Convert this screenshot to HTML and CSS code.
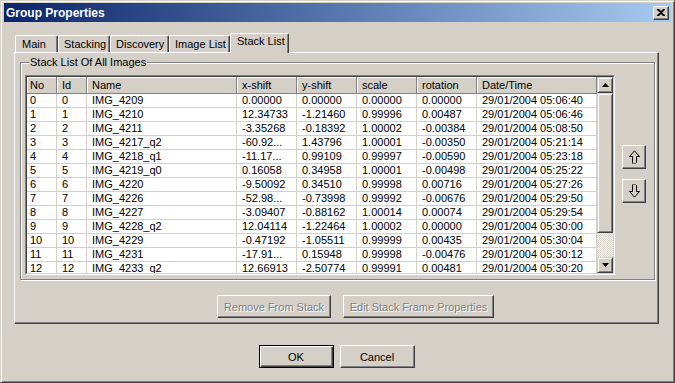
FILE: index.html
```html
<!DOCTYPE html>
<html lang="en">

<head>
    <meta charset="UTF-8">
    <title>Group Properties</title>
    <link rel="stylesheet" href="styles.css">
</head>

<body>

    <div class="window">
        <!-- Title bar -->
        <div class="titlebar">
            <span class="title">Group Properties</span>
            <button class="close-btn" type="button">
                <svg width="8" height="7" viewBox="0 0 8 7">
                    <path d="M0 0h2l2 2 2-2h2v1L5 3.5 8 6v1H6L4 5 2 7H0V6l3-2.5L0 1z" fill="#000"/>
                </svg>
            </button>
        </div>

        <div class="client">
            <!-- Tabs -->
            <div class="tabs">
                <div class="tab tab-main">Main</div>
                <div class="tab tab-stacking">Stacking</div>
                <div class="tab tab-discovery">Discovery</div>
                <div class="tab tab-images">Image List</div>
                <div class="tab tab-stack active">Stack List</div>
            </div>

            <div class="panel">
                <fieldset class="group">
                    <legend>Stack List Of All Images</legend>
                    <div class="group-body">
                        <div class="listview">
                            <div class="listview-inner">
                                <div class="list-body">
                                    <table class="stack-table">
                                        <colgroup>
                                            <col class="c-no">
                                            <col class="c-id">
                                            <col class="c-name">
                                            <col class="c-num">
                                            <col class="c-num">
                                            <col class="c-num">
                                            <col class="c-num">
                                            <col class="c-date">
                                        </colgroup>
                                        <thead>
                                            <tr>
                                                <th class="first">No</th>
                                                <th>Id</th>
                                                <th>Name</th>
                                                <th>x-shift</th>
                                                <th>y-shift</th>
                                                <th>scale</th>
                                                <th>rotation</th>
                                                <th>Date/Time</th>
                                            </tr>
                                        </thead>
                                        <tbody id="rows"></tbody>
                                    </table>
                                </div>
                                <div class="vscroll">
                                    <div class="sb-btn">
                                        <svg width="7" height="4" viewBox="0 0 7 4"><path d="M3.5 0L7 4H0z" fill="#000"/></svg>
                                    </div>
                                    <div class="sb-thumb"></div>
                                    <div class="sb-track"></div>
                                    <div class="sb-btn">
                                        <svg width="7" height="4" viewBox="0 0 7 4"><path d="M0 0h7L3.5 4z" fill="#000"/></svg>
                                    </div>
                                </div>
                            </div>
                        </div>

                        <div class="move-buttons">
                            <button class="btn move-btn" type="button">
                                <svg width="11" height="14" viewBox="0 0 11 14">
                                    <path d="M3.5 13V6.5H0.5L5.5 0.8 10.5 6.5H7.5V13" fill="none" stroke="#000"/>
                                    <path d="M3.5 13.5H7.5" fill="none" stroke="#000" stroke-dasharray="1 1"/>
                                </svg>
                            </button>
                            <button class="btn move-btn" type="button">
                                <svg width="11" height="14" viewBox="0 0 11 14">
                                    <path d="M3.5 1V7.5H0.5L5.5 13.2 10.5 7.5H7.5V1" fill="none" stroke="#000"/>
                                    <path d="M3.5 0.5H7.5" fill="none" stroke="#000" stroke-dasharray="1 1"/>
                                </svg>
                            </button>
                        </div>
                    </div>
                </fieldset>

                <div class="panel-actions">
                    <button class="btn disabled btn-remove" type="button">Remove From Stack</button>
                    <button class="btn disabled btn-edit" type="button">Edit Stack Frame Properties</button>
                </div>
            </div>

            <div class="dialog-actions">
                <button class="btn default" type="button">OK</button>
                <button class="btn" type="button">Cancel</button>
            </div>
        </div>
    </div>

    <script>
        // Stack frames shown in the list
        const frames = [
            [0, 0, 'IMG_4209', '0.00000', '0.00000', '0.00000', '0.00000', '29/01/2004 05:06:40'],
            [1, 1, 'IMG_4210', '12.34733', '-1.21460', '0.99996', '0.00487', '29/01/2004 05:06:46'],
            [2, 2, 'IMG_4211', '-3.35268', '-0.18392', '1.00002', '-0.00384', '29/01/2004 05:08:50'],
            [3, 3, 'IMG_4217_q2', '-60.92...', '1.43796', '1.00001', '-0.00350', '29/01/2004 05:21:14'],
            [4, 4, 'IMG_4218_q1', '-11.17...', '0.99109', '0.99997', '-0.00590', '29/01/2004 05:23:18'],
            [5, 5, 'IMG_4219_q0', '0.16058', '0.34958', '1.00001', '-0.00498', '29/01/2004 05:25:22'],
            [6, 6, 'IMG_4220', '-9.50092', '0.34510', '0.99998', '0.00716', '29/01/2004 05:27:26'],
            [7, 7, 'IMG_4226', '-52.98...', '-0.73998', '0.99992', '-0.00676', '29/01/2004 05:29:50'],
            [8, 8, 'IMG_4227', '-3.09407', '-0.88162', '1.00014', '0.00074', '29/01/2004 05:29:54'],
            [9, 9, 'IMG_4228_q2', '12.04114', '-1.22464', '1.00002', '0.00000', '29/01/2004 05:30:00'],
            [10, 10, 'IMG_4229', '-0.47192', '-1.05511', '0.99999', '0.00435', '29/01/2004 05:30:04'],
            [11, 11, 'IMG_4231', '-17.91...', '0.15948', '0.99998', '-0.00476', '29/01/2004 05:30:12'],
            [12, 12, 'IMG_4233_q2', '12.66913', '-2.50774', '0.99991', '0.00481', '29/01/2004 05:30:20']
        ];

        const tbody = document.getElementById('rows');
        frames.forEach(function (frame) {
            const tr = document.createElement('tr');
            frame.forEach(function (value, i) {
                const td = document.createElement('td');
                if (i === 0) td.className = 'first';
                td.textContent = value;
                tr.appendChild(td);
            });
            tbody.appendChild(tr);
        });
    </script>
</body>

</html>
```

FILE: styles.css
```css
body {
    margin: 0;
    font-family: "Liberation Sans", Arial, sans-serif;
    font-size: 11px;
    background-color: #d4d0c8;
    color: #000;
}

.window {
    width: 675px;
    height: 383px;
    box-sizing: border-box;
    background-color: #d4d0c8;
    border: 1px solid;
    border-color: #d4d0c8 #404040 #404040 #d4d0c8;
    box-shadow: inset 1px 1px #fff, inset -1px -1px #808080;
    padding: 2px 3px 3px 3px;
    display: flex;
    flex-direction: column;
}

/* Title bar */
.titlebar {
    height: 19px;
    flex-shrink: 0;
    background: linear-gradient(to right, #0a246a, #a6caf0);
    display: flex;
    align-items: center;
    justify-content: space-between;
    padding: 0 2px;
}

.titlebar .title {
    color: #fff;
    font-weight: bold;
    font-size: 12px;
}

.close-btn {
    width: 16px;
    height: 14px;
    padding: 0;
    margin: 0;
    background-color: #d4d0c8;
    border: 1px solid;
    border-color: #fff #404040 #404040 #fff;
    box-shadow: inset -1px -1px #808080;
    display: flex;
    align-items: center;
    justify-content: center;
}

/* Client area */
.client {
    flex: 1;
    display: flex;
    flex-direction: column;
    padding: 11px 12px 0 10px;
}

.tabs {
    display: flex;
    align-items: flex-end;
    height: 19px;
    padding-left: 1px;
}

.tab {
    height: 17px;
    box-sizing: border-box;
    border: 1px solid;
    border-color: #fff #404040 transparent #fff;
    border-bottom: none;
    border-radius: 2px 2px 0 0;
    box-shadow: inset -1px 0 #808080;
    padding-left: 5px;
    line-height: 16px;
    white-space: nowrap;
}

.tab-main { width: 43px; padding-left: 6px; }
.tab-stacking { width: 52px; }
.tab-discovery { width: 59px; }
.tab-images { width: 61px; }
.tab-stack { width: 59px; }

.tab.active {
    height: 20px;
    margin-bottom: -1px;
    background-color: #d4d0c8;
    position: relative;
    z-index: 1;
    padding-left: 6px;
    line-height: 15px;
}

.panel {
    border: 1px solid;
    border-color: #fff #404040 #404040 #fff;
    box-shadow: inset -1px -1px #808080;
    padding: 3px 3px 5px 5px;
}

/* Group box */
.group {
    margin: 0;
    padding: 6px 8px 4px 4px;
    border: 1px solid #808080;
    box-shadow: inset 1px 1px #fff, 1px 1px 0 #fff;
}

.group legend {
    padding: 0 1px;
    margin-left: 4px;
    line-height: 13px;
    background-color: #d4d0c8;
}

.group-body {
    display: flex;
}

/* List view */
.listview {
    width: 590px;
    height: 200px;
    box-sizing: border-box;
    border: 1px solid;
    border-color: #808080 #fff #fff #808080;
}

.listview-inner {
    height: 100%;
    box-sizing: border-box;
    border: 1px solid;
    border-color: #404040 #d4d0c8 #d4d0c8 #404040;
    display: flex;
    background-color: #fff;
}

.list-body {
    flex: 1;
    overflow: hidden;
}

.stack-table {
    width: 570px;
    table-layout: fixed;
    border-collapse: separate;
    border-spacing: 0;
}

.c-no { width: 30px; }
.c-id { width: 30px; }
.c-name { width: 150px; }
.c-num { width: 60px; }
.c-date { width: 120px; }

.stack-table th {
    height: 16px;
    padding: 0 5px;
    text-align: left;
    font-weight: normal;
    background-color: #d4d0c8;
    border-right: 1px solid #808080;
    border-bottom: 1px solid #808080;
    box-shadow: inset 1px 1px #fff;
    line-height: 16px;
    white-space: nowrap;
    overflow: hidden;
}

.stack-table td {
    height: 13px;
    padding: 0 5px;
    line-height: 13px;
    border-right: 1px solid #d4d0c8;
    border-bottom: 1px solid #d4d0c8;
    white-space: nowrap;
    overflow: hidden;
}

.stack-table .first {
    padding-left: 3px;
}

/* Scroll bar */
.vscroll {
    width: 16px;
    display: flex;
    flex-direction: column;
}

.sb-btn,
.sb-thumb {
    box-sizing: border-box;
    background-color: #d4d0c8;
    border: 1px solid;
    border-color: #d4d0c8 #404040 #404040 #d4d0c8;
    box-shadow: inset 1px 1px #fff, inset -1px -1px #808080;
}

.sb-btn {
    height: 16px;
    display: flex;
    align-items: center;
    justify-content: center;
}

.sb-thumb {
    height: 140px;
}

.sb-track {
    flex: 1;
    background-image: conic-gradient(#fff 25%, #d4d0c8 0 50%, #fff 0 75%, #d4d0c8 0);
    background-size: 2px 2px;
}

/* Buttons */
.btn {
    font-family: inherit;
    font-size: 11px;
    color: #000;
    background-color: #d4d0c8;
    border: 1px solid;
    border-color: #fff #404040 #404040 #fff;
    box-shadow: inset -1px -1px #808080;
    padding: 0;
    margin: 0;
    height: 23px;
}

.btn.disabled {
    color: #808080;
    text-shadow: 1px 1px 0 #fff;
}

.btn.default {
    border: 1px solid #000;
    box-shadow: inset 1px 1px #fff, inset -1px -1px #404040, inset -2px -2px #808080;
}

.move-buttons {
    display: flex;
    flex-direction: column;
    gap: 10px;
    padding-top: 70px;
    margin-left: 7px;
}

.move-btn {
    width: 24px;
    height: 24px;
    display: flex;
    align-items: center;
    justify-content: center;
}

.panel-actions {
    display: flex;
    gap: 12px;
    margin-top: 15px;
    padding-left: 197px;
}

.btn-remove { width: 114px; }
.btn-edit { width: 151px; }

.dialog-actions {
    display: flex;
    justify-content: center;
    gap: 6px;
    margin-top: 21px;
}

.dialog-actions .btn {
    width: 75px;
}
```
